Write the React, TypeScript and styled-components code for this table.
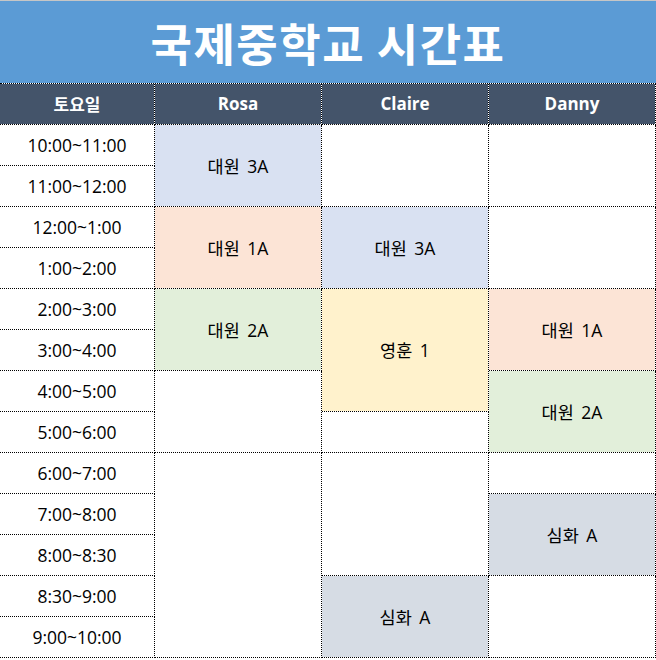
import React from 'react';
import styled, { createGlobalStyle } from 'styled-components';

const GlobalStyle = createGlobalStyle`
  html, body {
    margin: 0;
    padding: 0;
    background: #ffffff;
  }
  body {
    font-family: "Open Sans", "Noto Sans CJK KR", sans-serif;
    color: #000;
  }
`;

const Page = styled.div`
  width: 656px;
  background: #ffffff;
`;

const Title = styled.h1`
  margin: 0;
  height: 82px;
  border-top: 1px solid #c6c6c6;
  background: #5b9bd5;
  color: #ffffff;
  display: flex;
  align-items: center;
  justify-content: center;
  font-family: "Noto Sans CJK KR", sans-serif;
  font-size: 45px;
  font-weight: 700;
  letter-spacing: 1.5px;
`;

const Grid = styled.div`
  display: grid;
  grid-template-columns: 155px 167px 167px 167px;
  grid-template-rows: repeat(14, 41px);
  border-top: 1px dotted #000;
  background: #ffffff;
`;

const Cell = styled.div<{ $col: number; $row: number; $span?: number; $bg?: string }>`
  grid-column: ${(p) => p.$col};
  grid-row: ${(p) => p.$row} / span ${(p) => p.$span ?? 1};
  box-sizing: border-box;
  padding-bottom: 1px;
  border-right: 1px dotted #000;
  border-bottom: 1px dotted #000;
  background: ${(p) => p.$bg ?? '#ffffff'};
  background-clip: padding-box;
  display: flex;
  align-items: center;
  justify-content: center;
  font-size: 17.5px;
  word-spacing: 3px;
  white-space: nowrap;
`;

const HeadCell = styled(Cell)`
  color: #ffffff;
  font-weight: 700;
  font-size: 17px;
  word-spacing: 0;
`;

const TimeCell = styled(Cell)`
  font-size: 17.5px;
  word-spacing: 0;
`;

const colors = {
  blue: '#d9e1f2',
  peach: '#fce4d6',
  green: '#e2efda',
  yellow: '#fff2cc',
  slate: '#d6dce4',
};

const times = [
  '10:00~11:00',
  '11:00~12:00',
  '12:00~1:00',
  '1:00~2:00',
  '2:00~3:00',
  '3:00~4:00',
  '4:00~5:00',
  '5:00~6:00',
  '6:00~7:00',
  '7:00~8:00',
  '8:00~8:30',
  '8:30~9:00',
  '9:00~10:00',
];

type Block = { start: number; span: number; label?: string; color?: string };

const people: { name: string; blocks: Block[] }[] = [
  {
    name: 'Rosa',
    blocks: [
      { start: 0, span: 2, label: '대원 3A', color: colors.blue },
      { start: 2, span: 2, label: '대원 1A', color: colors.peach },
      { start: 4, span: 2, label: '대원 2A', color: colors.green },
      { start: 6, span: 2 },
      { start: 8, span: 5 },
    ],
  },
  {
    name: 'Claire',
    blocks: [
      { start: 0, span: 2 },
      { start: 2, span: 2, label: '대원 3A', color: colors.blue },
      { start: 4, span: 3, label: '영훈 1', color: colors.yellow },
      { start: 7, span: 1 },
      { start: 8, span: 3 },
      { start: 11, span: 2, label: '심화 A', color: colors.slate },
    ],
  },
  {
    name: 'Danny',
    blocks: [
      { start: 0, span: 2 },
      { start: 2, span: 2 },
      { start: 4, span: 2, label: '대원 1A', color: colors.peach },
      { start: 6, span: 2, label: '대원 2A', color: colors.green },
      { start: 8, span: 1 },
      { start: 9, span: 2, label: '심화 A', color: colors.slate },
      { start: 11, span: 2 },
    ],
  },
];

export default function App() {
  return (
    <Page>
      <GlobalStyle />
      <Title>국제중학교 시간표</Title>
      <Grid>
        <HeadCell $col={1} $row={1} $bg="#44546a">토요일</HeadCell>
        {people.map((p, i) => (
          <HeadCell key={p.name} $col={i + 2} $row={1} $bg="#44546a">
            {p.name}
          </HeadCell>
        ))}
        {times.map((t, i) => (
          <TimeCell key={t} $col={1} $row={i + 2}>
            {t}
          </TimeCell>
        ))}
        {people.map((p, i) =>
          p.blocks.map((b) => (
            <Cell
              key={p.name + b.start}
              $col={i + 2}
              $row={b.start + 2}
              $span={b.span}
              $bg={b.color}
            >
              {b.label}
            </Cell>
          ))
        )}
      </Grid>
    </Page>
  );
}
